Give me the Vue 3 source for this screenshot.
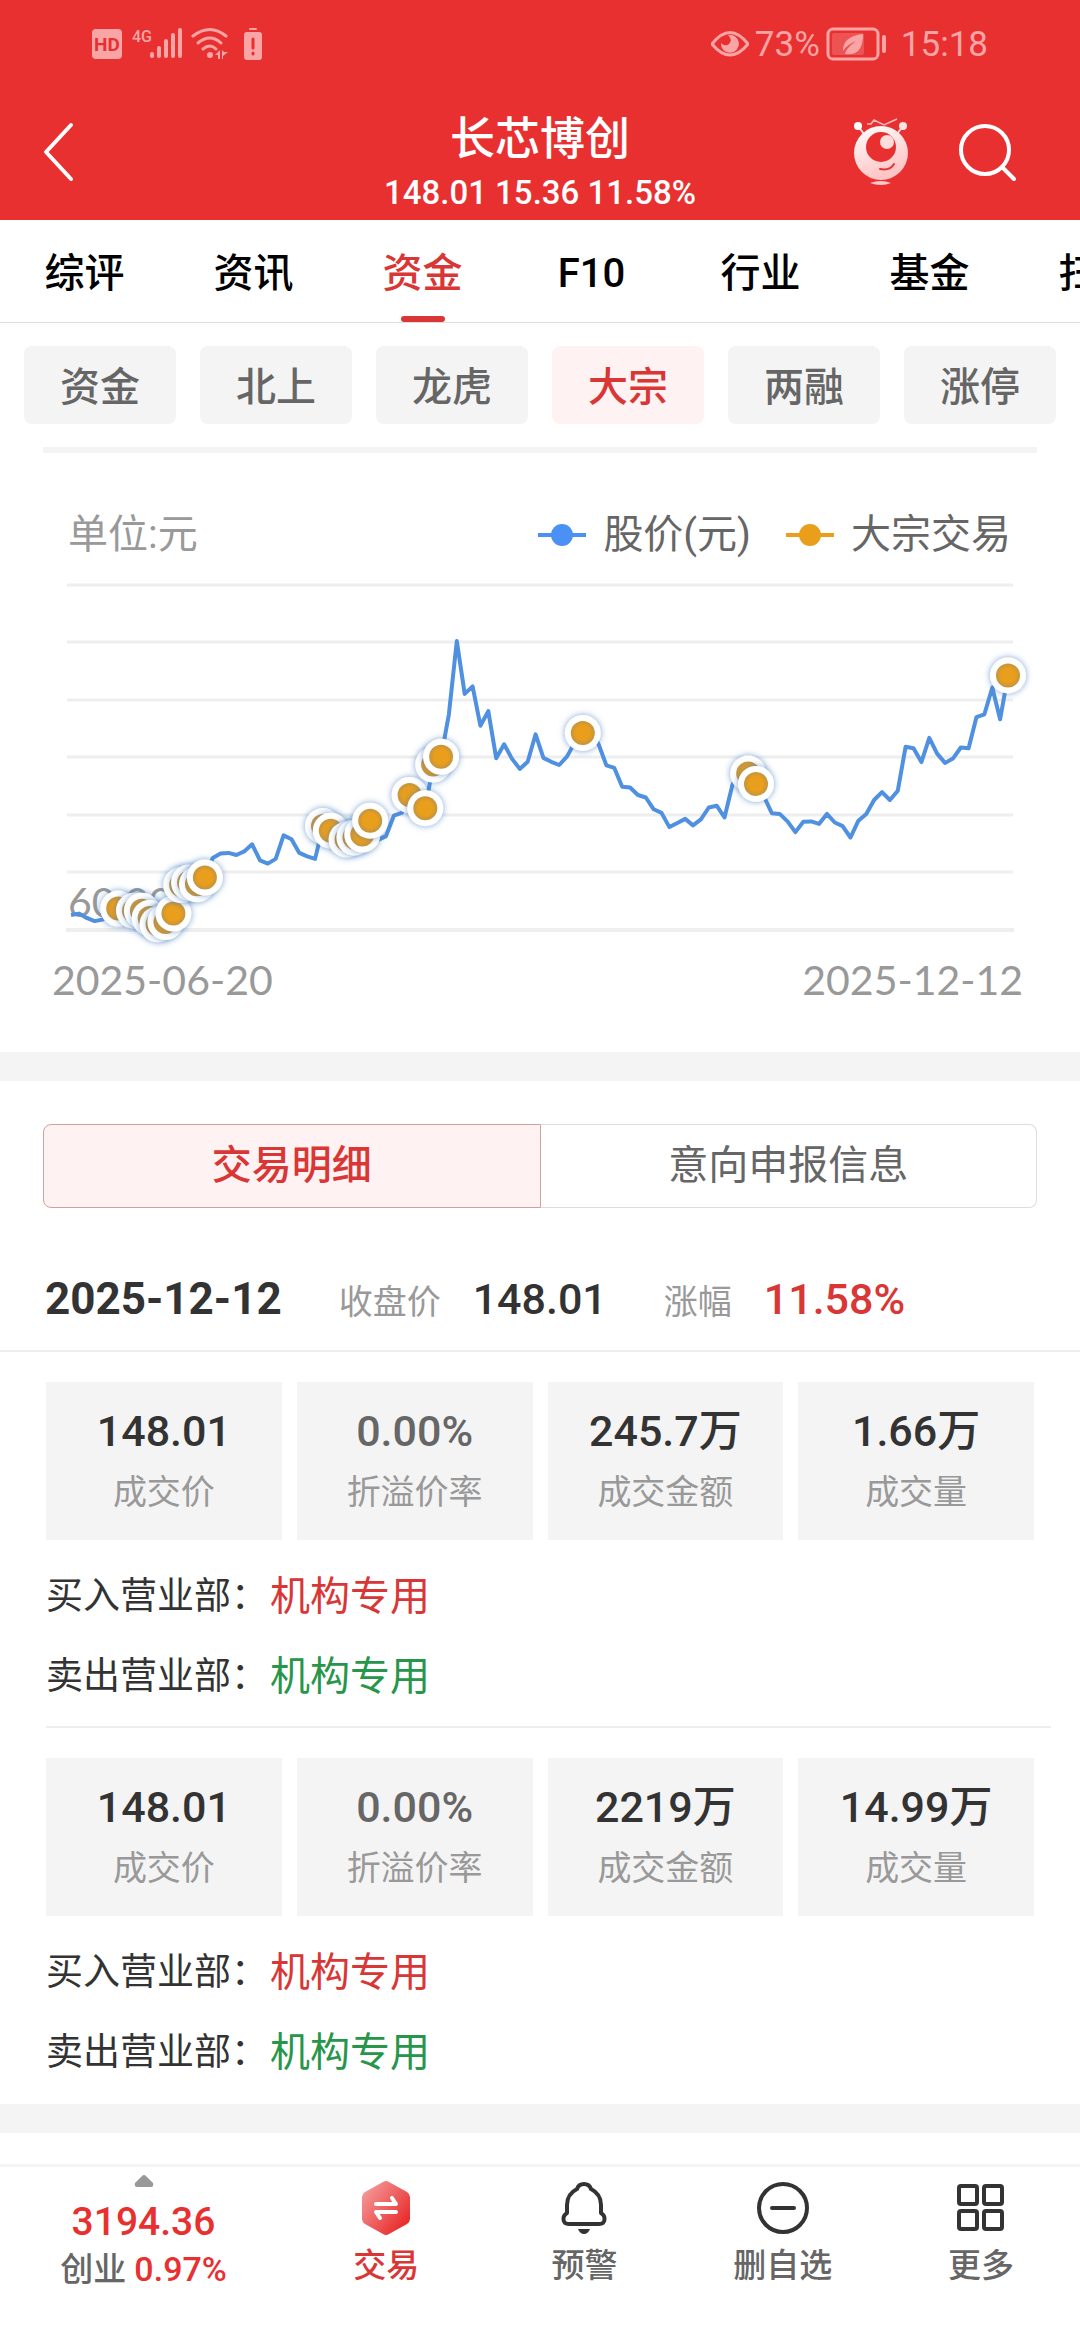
<script setup>
import { ref, computed } from 'vue';

const tabs = ['综评', '资讯', '资金', 'F10', '行业', '基金', '扫雷'];
const activeTab = ref('资金');

const chips = ['资金', '北上', '龙虎', '大宗', '两融', '涨停'];
const activeChip = ref('大宗');

const segments = ['交易明细', '意向申报信息'];
const activeSegment = ref('交易明细');

const records = [
    { price: '148.01', rate: '0.00%', amount: '245.7万', volume: '1.66万', buyer: '机构专用', seller: '机构专用' },
    { price: '148.01', rate: '0.00%', amount: '2219万', volume: '14.99万', buyer: '机构专用', seller: '机构专用' },
];

// daily close, measured downwards on the price axis
const closes = [
    1274, 1270, 1282, 1291, 1287, 1270, 1256, 1265, 1262, 1262, 1282, 1300, 1294, 1270, 1190,
    1183, 1188, 1169, 1114, 1102, 1100, 1106, 1096, 1076, 1121, 1130, 1117, 1051, 1062, 1100,
    1110, 1117, 1025, 1038, 1055, 1063, 1057, 1049, 1010, 1064, 1053, 996, 988, 938, 960,
    975, 853, 831, 712, 507, 655, 634, 744, 703, 835, 796, 836, 865, 845, 768,
    834, 845, 854, 830, 790, 764, 750, 796, 855, 862, 915, 917, 938, 945, 978,
    988, 1028, 1016, 1005, 1023, 1006, 973, 968, 1001, 910, 868, 878, 907, 942, 989,
    991, 1012, 1042, 1013, 1012, 1019, 991, 1015, 1025, 1057, 1010, 991, 952, 930, 952,
    926, 803, 807, 846, 778, 822, 848, 836, 805, 807, 720, 712, 637, 726, 603,
];
// days that have block trades
const tradeDays = [6, 8, 9, 10, 11, 12, 13, 14, 15, 16, 17, 32, 33, 35, 36, 37, 38, 43, 45, 46, 47, 65, 86, 87, 119];

const gridLines = [15, 72, 130, 187, 245, 302];

const toX = (i) => Math.round(710 + (i * 9370) / 119) / 10;
const toY = (v) => Math.round((v / 2.8 - 110) * 10) / 10;

const linePoints = computed(() => closes.map((v, i) => `${toX(i)},${toY(v)}`).join(' '));
const markers = computed(() => tradeDays.map((i) => ({ x: toX(i), y: toY(closes[i]) })));
</script>

<template>
    <div class="page">
        <header class="top">
            <div class="status">
                <div class="status-left">
                    <svg width="170" height="36" viewBox="0 0 170 36" fill="currentColor">
                        <rect x="0" y="3" width="30" height="30" rx="4" />
                        <text x="15" y="25" class="hd">HD</text>
                        <text x="40" y="16" class="net">4G</text>
                        <rect x="58" y="26" width="4" height="6" rx="2" />
                        <rect x="65" y="20" width="4" height="12" rx="2" />
                        <rect x="72" y="13" width="4" height="19" rx="2" />
                        <rect x="79" y="7" width="4" height="25" rx="2" />
                        <rect x="86" y="2" width="4" height="30" rx="2" />
                        <g fill="none" stroke="currentColor" stroke-width="3" stroke-linecap="round">
                            <path d="M101 10Q118 -3 134 10" />
                            <path d="M106 17Q118 7 129 17" />
                            <path d="M111 23Q118 17 124 23" />
                        </g>
                        <circle cx="118" cy="29" r="3" />
                        <path d="M128 24v9h-2v-4h-3zM130 24v9h1v-3l5-4h-4z" />
                        <rect x="157" y="2" width="8" height="2" rx="1" />
                        <rect x="152" y="6" width="18" height="28" rx="3" />
                        <path class="bang" d="M161 13v9M161 27v1" />
                    </svg>
                </div>
                <div class="status-right">
                    <svg width="38" height="36" viewBox="0 0 38 36">
                        <path d="M1 18Q19 -5 37 18Q19 40 1 18Z" fill="none" stroke="currentColor" stroke-width="3" />
                        <path d="M17 9A9 9 0 1 1 10 17Q14 21 18 18Q22 14 17 9Z" fill="currentColor" />
                    </svg>
                    <span>73%</span>
                    <svg class="battery" width="61" height="36" viewBox="0 0 61 36">
                        <rect x="2" y="3" width="50" height="30" rx="5" fill="none" stroke="currentColor" stroke-width="3" />
                        <rect x="6" y="7" width="32" height="22" rx="2" fill="currentColor" opacity="0.3" />
                        <path d="M37 8C27 9 17 13 17 25C20 20 25 17 30 15C25 19 20 23 19 28C33 30 37 21 37 8Z" fill="currentColor" />
                        <rect x="56" y="9" width="4" height="18" rx="2" fill="currentColor" />
                    </svg>
                    <span>15:18</span>
                </div>
            </div>
            <div class="nav">
                <button class="icon-btn" aria-label="返回">
                    <svg width="32" height="60" viewBox="0 0 32 60" fill="none" stroke="#fff" stroke-width="4" stroke-linecap="round" stroke-linejoin="round">
                        <path d="M29 3L4 30L29 57" />
                    </svg>
                </button>
                <div class="stock">
                    <h1>长芯博创</h1>
                    <p>148.01 15.36 11.58%</p>
                </div>
                <div class="nav-right">
                    <button class="icon-btn" aria-label="助手">
                        <svg width="56" height="70" viewBox="0 0 56 70">
                            <defs>
                                <linearGradient id="bot" x1="0" y1="0" x2="0.4" y2="1">
                                    <stop offset="0" stop-color="#fff" />
                                    <stop offset="1" stop-color="#ffc4c4" />
                                </linearGradient>
                            </defs>
                            <path d="M14 7h4l3-4 10 5 13-6" fill="none" stroke="#ffb9b9" stroke-width="1.5" />
                            <path d="M5 9l6 8M50 9l-6 8" stroke="#ffe3e3" stroke-width="2" />
                            <circle cx="5" cy="9" r="4" fill="#fff" />
                            <circle cx="50" cy="9" r="4" fill="#ffe3e3" />
                            <circle cx="28" cy="36" r="27" fill="url(#bot)" />
                            <circle cx="28" cy="30" r="15" fill="#e93030" />
                            <circle cx="34" cy="25" r="7" fill="#ffdcdc" />
                            <path d="M27 52Q37 54 41 47" fill="none" stroke="#e93030" stroke-width="2" stroke-linecap="round" />
                            <path d="M17 66Q28 62 38 66Q28 70 17 66Z" fill="#ffc9c9" />
                        </svg>
                    </button>
                    <button class="icon-btn" aria-label="搜索">
                        <svg width="58" height="60" viewBox="0 0 58 60" fill="none" stroke="#fff" stroke-width="4" stroke-linecap="round">
                            <circle cx="27" cy="28" r="24" />
                            <path d="M44 45L56 57" />
                        </svg>
                    </button>
                </div>
            </div>
        </header>

        <nav class="tabs">
            <button v-for="tab in tabs" :key="tab" :class="{ active: tab === activeTab }" @click="activeTab = tab">
                {{ tab }}
            </button>
        </nav>

        <div class="chips">
            <button v-for="chip in chips" :key="chip" :class="{ active: chip === activeChip }" @click="activeChip = chip">
                {{ chip }}
            </button>
        </div>

        <section class="chart">
            <div class="chart-head">
                <span class="unit">单位:元</span>
                <span class="legend blue"><i></i>股价(元)</span>
                <span class="legend gold"><i></i>大宗交易</span>
            </div>
            <svg class="plot" viewBox="0 0 1080 380">
                <defs>
                    <radialGradient id="dot">
                        <stop offset="0.6" stop-color="#e99e1c" />
                        <stop offset="1" stop-color="#c39440" />
                    </radialGradient>
                    <filter id="glow" x="-40%" y="-40%" width="180%" height="180%">
                        <feDropShadow dx="0" dy="0" stdDeviation="3" flood-color="#3f78be" flood-opacity="0.7" />
                    </filter>
                </defs>
                <line v-for="y in gridLines" :key="y" x1="67" :y1="y" x2="1013" :y2="y" class="grid" />
                <line x1="66" y1="360" x2="1014" y2="360" class="grid base" />
                <text x="68" y="347" class="axis">60.00</text>
                <polyline :points="linePoints" class="price" />
                <g v-for="m in markers" :key="m.x">
                    <circle :cx="m.x" :cy="m.y" r="18" fill="#fff" filter="url(#glow)" />
                    <circle :cx="m.x" :cy="m.y" r="12" fill="url(#dot)" />
                </g>
            </svg>
            <div class="dates">
                <span>2025-06-20</span>
                <span>2025-12-12</span>
            </div>
        </section>

        <div class="band"></div>

        <div class="segments">
            <button v-for="s in segments" :key="s" :class="{ active: s === activeSegment }" @click="activeSegment = s">
                {{ s }}
            </button>
        </div>

        <div class="day">
            <strong>2025-12-12</strong>
            <span class="label">收盘价</span>
            <span class="num">148.01</span>
            <span class="label">涨幅</span>
            <span class="num up">11.58%</span>
        </div>

        <section v-for="(r, i) in records" :key="i" class="record">
            <dl class="cards">
                <div>
                    <dd>{{ r.price }}</dd>
                    <dt>成交价</dt>
                </div>
                <div>
                    <dd class="flat">{{ r.rate }}</dd>
                    <dt>折溢价率</dt>
                </div>
                <div>
                    <dd>{{ r.amount }}</dd>
                    <dt>成交金额</dt>
                </div>
                <div>
                    <dd>{{ r.volume }}</dd>
                    <dt>成交量</dt>
                </div>
            </dl>
            <div class="depts">
                <p>买入营业部：<span class="buy">{{ r.buyer }}</span></p>
                <p>卖出营业部：<span class="sell">{{ r.seller }}</span></p>
            </div>
        </section>

        <div class="band"></div>

        <footer class="bottom">
            <button class="index">
                <svg width="20" height="12" viewBox="0 0 20 12" fill="#999">
                    <path d="M8 1Q10 -1 12 1L19 8Q20 12 17 12H3Q0 12 1 8Z" />
                </svg>
                <b>3194.36</b>
                <span>创业 <em>0.97%</em></span>
            </button>
            <button class="trade">
                <svg width="54" height="54" viewBox="0 0 54 54">
                    <defs>
                        <linearGradient id="hex" x1="0" y1="0.1" x2="0.9" y2="0.9">
                            <stop offset="0" stop-color="#f5a0a0" />
                            <stop offset="1" stop-color="#e82525" />
                        </linearGradient>
                    </defs>
                    <path d="M24 1Q27 -1 30 1L48 11Q51 13 51 16V38Q51 41 48 43L30 53Q27 55 24 53L6 43Q3 41 3 38V16Q3 13 6 11Z" fill="url(#hex)" />
                    <path d="M17 23H37L33 17M37 31H17L21 37" fill="none" stroke="#fff" stroke-width="4" stroke-linecap="round" stroke-linejoin="round" />
                </svg>
                <span>交易</span>
            </button>
            <button>
                <svg width="54" height="54" viewBox="0 0 54 54" fill="none" stroke="#333" stroke-width="4" stroke-linejoin="round">
                    <path d="M27 3C23 3 21 5 20 8C14 11 10 17 10 24V32C5 35 5 43 12 43H42C49 43 49 35 44 32V24C44 17 40 11 34 8C33 5 31 3 27 3Z" />
                    <path d="M21 48H33Q31 53 27 53Q23 53 21 48Z" fill="#333" stroke="none" />
                </svg>
                <span>预警</span>
            </button>
            <button>
                <svg width="54" height="54" viewBox="0 0 54 54" fill="none" stroke="#333" stroke-width="4" stroke-linecap="round">
                    <circle cx="27" cy="27" r="24" />
                    <path d="M16 27H38" />
                </svg>
                <span>删自选</span>
            </button>
            <button>
                <svg width="54" height="54" viewBox="0 0 54 54" fill="none" stroke="#333" stroke-width="4">
                    <rect x="5" y="5" width="18" height="18" rx="2" />
                    <rect x="30" y="5" width="18" height="18" rx="2" />
                    <rect x="5" y="30" width="18" height="18" rx="2" />
                    <rect x="30" y="30" width="18" height="18" rx="2" />
                </svg>
                <span>更多</span>
            </button>
        </footer>
    </div>
</template>

<style>
body {
    background: #fff;
}
</style>

<style scoped>
* {
    box-sizing: border-box;
}

.page {
    display: flex;
    flex-direction: column;
    min-height: 100vh;
    overflow-x: clip;
    background: #fff;
    color: #333;
    font-family: Roboto, "Noto Sans CJK SC", sans-serif;
}

button {
    padding: 0;
    border: none;
    background: none;
    color: inherit;
    font: inherit;
    cursor: pointer;
}

h1, p, dl, dd {
    margin: 0;
}

svg {
    display: block;
    flex-shrink: 0;
}

.top {
    background: #e93030;
    color: #fff;
}

.status {
    display: flex;
    justify-content: space-between;
    align-items: center;
    height: 88px;
    padding: 0 92px;
    color: #faa5a5;
    font-size: 35px;
}

.status-right {
    display: flex;
    align-items: center;
    gap: 6px;
}

.battery {
    margin-right: 8px;
}

.hd {
    fill: #e93030;
    font-size: 19px;
    font-weight: 700;
    text-anchor: middle;
}

.net {
    font-size: 16px;
    font-weight: 500;
}

.bang {
    stroke: #e93030;
    stroke-width: 3;
    stroke-linecap: round;
}

.nav {
    display: grid;
    grid-template-columns: 1fr auto 1fr;
    align-items: center;
    height: 132px;
    padding: 0 64px 4px 42px;
}

.icon-btn {
    justify-self: start;
}

.stock {
    padding: 23px 0 0 22px;
    text-align: center;
}

.stock h1 {
    margin-bottom: 3px;
    font-size: 45px;
    font-weight: 500;
    line-height: 56px;
}

.stock p {
    font-size: 33px;
    font-weight: 500;
    line-height: 44px;
}

.nav-right {
    display: flex;
    justify-content: flex-end;
    align-items: center;
    gap: 49px;
}

.tabs {
    display: flex;
    height: 103px;
    overflow: hidden;
    border-bottom: 1px solid #ddd;
    color: #000;
    font-size: 40px;
    font-weight: 500;
    line-height: 48px;
}

.tabs button {
    position: relative;
    flex: 0 0 169px;
    padding-top: 6px;
}

.tabs .active {
    color: #d93636;
}

.tabs .active::after {
    content: "";
    position: absolute;
    left: 50%;
    bottom: 0;
    width: 44px;
    height: 6px;
    margin-left: -22px;
    border-radius: 3px;
    background: #d93636;
}

.chips {
    display: flex;
    gap: 24px;
    padding: 23px 24px;
}

.chips button {
    flex: 1;
    height: 78px;
    padding-top: 6px;
    border-radius: 8px;
    background: #f4f4f4;
    color: #666;
    font-size: 40px;
    font-weight: 500;
    line-height: 48px;
}

.chips .active {
    background: #fff2f2;
    color: #d93636;
}

.chart {
    padding-bottom: 50px;
}

.chart::before {
    content: "";
    display: block;
    height: 6px;
    margin: 0 43px;
    background: #f4f4f4;
}

.chart-head {
    display: flex;
    align-items: center;
    gap: 35px;
    padding: 58px 69px 11px 68px;
    color: #666;
    font-size: 40px;
    line-height: 48px;
}

.unit {
    margin-right: auto;
    color: #999;
}

.legend {
    display: flex;
    align-items: center;
    gap: 17px;
}

.legend i {
    display: flex;
    justify-content: center;
    align-items: center;
    width: 48px;
    height: 4px;
    background: currentColor;
}

.legend i::after {
    content: "";
    width: 22px;
    height: 22px;
    border-radius: 50%;
    flex-shrink: 0;
    background: currentColor;
}

.blue i {
    color: #4a90f5;
}

.gold i {
    color: #e99e1c;
}

.plot {
    width: 100%;
}

.grid {
    stroke: #eee;
    stroke-width: 3;
}

.base {
    stroke-width: 4;
}

.axis {
    fill: #999;
    font-family: Lato, sans-serif;
    font-size: 41px;
}

.price {
    fill: none;
    stroke: #5090e0;
    stroke-width: 4;
    stroke-linejoin: round;
}

.dates {
    display: flex;
    justify-content: space-between;
    padding: 8px 57px 0 52px;
    color: #999;
    font-family: Lato, sans-serif;
    font-size: 41px;
    line-height: 44px;
}

.band {
    height: 29px;
    background: #f4f4f4;
}

.segments {
    display: flex;
    margin: 43px 43px 0;
}

.segments button {
    flex: 1;
    height: 84px;
    border: 1px solid #ddd;
    color: #666;
    font-size: 40px;
    line-height: 48px;
}

.segments button:first-child {
    border-radius: 8px 0 0 8px;
}

.segments button:last-child {
    border-left: none;
    border-radius: 0 8px 8px 0;
}

.segments .active {
    border-color: #d0a0a0;
    background: #fff2f2;
    color: #d93636;
    font-weight: 500;
}

.day {
    display: flex;
    align-items: baseline;
    padding: 63px 45px 20px;
    border-bottom: 2px solid #eee;
    line-height: 56px;
}

.day strong {
    margin-right: 57px;
    font-size: 44px;
    font-weight: 700;
}

.label {
    margin-right: 32px;
    color: #999;
    font-size: 34px;
}

.num {
    margin-right: 57px;
    font-size: 43px;
    font-weight: 500;
}

.up {
    color: #d93636;
}

.record {
    padding-top: 30px;
}

.cards {
    display: grid;
    grid-template-columns: repeat(4, 1fr);
    gap: 15px;
    padding: 0 46px;
    text-align: center;
}

.cards div {
    padding: 21px 0 25px;
    background: #f4f4f4;
}

.cards dd {
    margin-bottom: 10px;
    font-size: 43px;
    font-weight: 500;
    line-height: 56px;
}

.cards .flat {
    color: #666;
}

.cards dt {
    color: #999;
    font-size: 34px;
    line-height: 46px;
}

.depts {
    margin: 17px 29px 0 46px;
    padding-bottom: 9px;
    border-bottom: 2px solid #eee;
    font-size: 37px;
    line-height: 80px;
}

.record:last-of-type .depts {
    border-color: transparent;
}

.depts p {
    display: flex;
}

.depts span {
    margin-left: 2px;
    font-size: 40px;
}

.buy {
    color: #d93636;
}

.sell {
    color: #27964a;
}

.bottom {
    position: sticky;
    bottom: 0;
    display: flex;
    height: 176px;
    margin-top: auto;
    border-top: 3px solid #f4f4f4;
    background: #fff;
    color: #666;
    font-size: 33px;
    font-weight: 500;
}

.bottom button {
    display: flex;
    flex-direction: column;
    align-items: center;
    flex: 1;
    gap: 11px;
    padding-top: 14px;
    line-height: 40px;
}

.bottom .index {
    flex: 0 0 287px;
    gap: 2px;
    padding-top: 8px;
    line-height: 46px;
}

.index b {
    margin-top: 11px;
    color: #e93030;
    font-size: 39px;
    font-weight: 500;
    line-height: 44px;
}

.index em {
    color: #e93030;
    font-size: 34px;
    font-style: normal;
}

.bottom .trade {
    color: #d93636;
}
</style>
